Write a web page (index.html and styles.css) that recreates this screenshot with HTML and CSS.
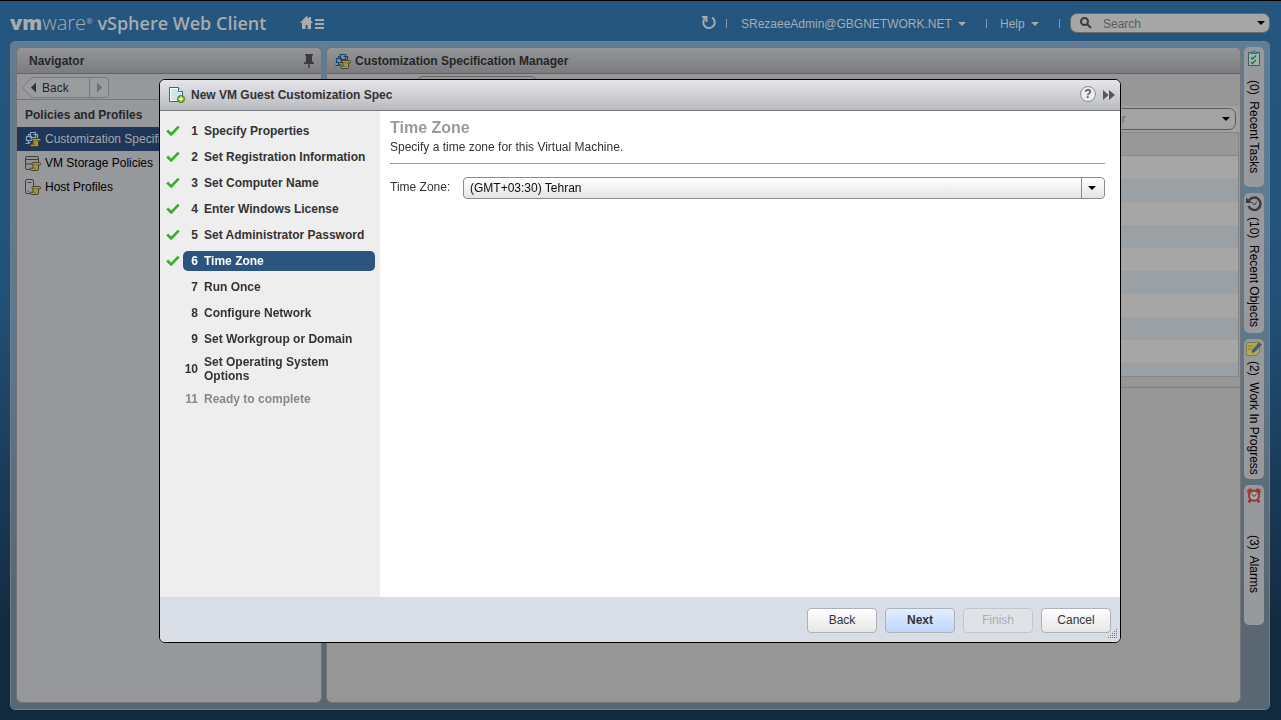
FILE: index.html
```
<!DOCTYPE html>
<html lang="en">
<head>
<meta charset="utf-8">
<title>vSphere Web Client</title>
<link rel="stylesheet" href="styles.css">
</head>
<body>

<svg class="sprites" width="0" height="0">
  <symbol id="check" viewBox="0 0 14 12"><path d="M1.200 5.500l4 4L12.700 1.700" fill="none" stroke="#35b024" stroke-width="2.600"/></symbol>
  <symbol id="scroll" viewBox="0 0 16 16">
    <path d="M8 7.500h6.500q1 0 1 1v1.300h-2v4.200q0 1.500-1.300 1.500H6.500q-1 0-1-1v-1.300H8V9.500q-1 0-1-1t1-1z" fill="#9f965c" stroke="#4d4522"/>
    <path d="M8 9.800h5.500M7 13.200h4" stroke="#6b6234" stroke-width=".8"/>
  </symbol>
  <symbol id="spec" viewBox="0 0 16 16">
    <path d="M5.500 1.500h5v5h-5zM8.500 3.500h4v4h-4M1.500 5.500h5v4h-5zM3.500 9.500v2h2M.5 12.500h4M3.500 5.500v-2h2" fill="none" stroke="currentColor" stroke-width="1.200"/>
    <use href="#scroll" width="16" height="16"/>
  </symbol>
  <symbol id="storage" viewBox="0 0 16 16">
    <path d="M2 1.500h10q1.500 0 1.500 1.500v10q0 1.500-1.500 1.500H2Q.5 14.500.5 13V3Q.5 1.500 2 1.500z" fill="#939393" stroke="#3f3f3f"/>
    <path d="M1 4.500h12M1 9h6" stroke="#3f3f3f"/>
    <use href="#scroll" width="16" height="16"/>
  </symbol>
  <symbol id="host" viewBox="0 0 16 16">
    <path d="M2 .5h5q1.500 0 1.500 1.500v12.500H2Q.5 14.500.5 13V2Q.5.500 2 .5z" fill="#9a9a9a" stroke="#3f3f3f"/>
    <path d="M2.500 3.500h4M2.500 12h1.500" stroke="#3f3f3f"/>
    <use href="#scroll" width="16" height="16"/>
  </symbol>
</svg>

<header class="topbar">
  <div class="brand"><b>vm</b><span class="brand-thin">ware</span><sup>®</sup> <span class="brand-name">vSphere Web Client</span></div>
  <button class="home" aria-label="Home">
    <svg width="24" height="16" viewBox="0 0 24 16" fill="#a9abad"><path d="M6.500 1L0 8h2v6h3.500v-4h2v4H11V8h2l-2-2.200V2H9v1.700zM15 4h9v2h-9zM15 8h9v2h-9zM15 12h9v2h-9z"/></svg>
  </button>
  <div class="tools">
    <button class="refresh" aria-label="Refresh">
      <svg width="16" height="16" viewBox="0 0 16 16" fill="none" stroke="#a9abad" stroke-width="2"><path d="M11 2.500a5.700 5.700 0 1 1-7 .8"/><path d="M1 2h4.500v5"/></svg>
    </button>
    <i class="sep"></i>
    <button class="menu user">SRezaeeAdmin@GBGNETWORK.NET <i class="caret"></i></button>
    <i class="sep"></i>
    <button class="menu help">Help <i class="caret"></i></button>
    <i class="sep"></i>
    <label class="search">
      <svg width="12" height="12" viewBox="0 0 12 12" fill="none" stroke="#3a3a3a" stroke-width="2"><circle cx="4.500" cy="4.500" r="3.500"/><path d="M7 7l4 4"/></svg>
      <input type="text" placeholder="Search" aria-label="Search">
      <i class="caret dark"></i>
    </label>
  </div>
</header>

<main class="shell">
  <nav class="panel navigator">
    <div class="panel-head"><h2>Navigator</h2>
      <svg width="10" height="14" viewBox="0 0 10 14" fill="#3b3b3b"><path d="M1 0h8v1.500H8V7l2 2v1H5.700v4H4.300v-4H0V9l2-2V1.500H1z"/></svg>
    </div>
    <div class="history">
      <svg class="history-shape" width="87" height="21" viewBox="0 0 87 21"><path d="M.5 10.500L9.500 1q1-.5 2-.5H83q3.500 0 3.500 3.500v13q0 3.500-3.500 3.500H11.500q-1 0-2-.5z" fill="#9b9ca0" stroke="#77787a"/><path d="M67.500 1v19" stroke="#77787a"/><path d="M14 5.500v10l-5-5z" fill="#333"/><path d="M75 5.500v10l5-5z" fill="#6f7073"/></svg>
      <button class="history-back">Back</button>
    </div>
    <h3>Policies and Profiles</h3>
    <ul class="nav-list">
      <li class="active"><a href="#"><svg width="16" height="16"><use href="#spec"/></svg>Customization Specification Manager</a></li>
      <li><a href="#"><svg width="16" height="16"><use href="#storage"/></svg>VM Storage Policies</a></li>
      <li><a href="#"><svg width="16" height="16"><use href="#host"/></svg>Host Profiles</a></li>
    </ul>
  </nav>

  <section class="panel manager">
    <div class="panel-head"><svg class="spec-icon" width="16" height="16"><use href="#spec"/></svg><h2>Customization Specification Manager</h2></div>
    <div class="manager-tabs"><div class="tab-group"></div></div>
    <div class="filter-row">
      <label class="filter"><input type="text" placeholder="Filter" aria-label="Filter"><i class="caret dark"></i></label>
    </div>
    <div class="grid-head"></div>
    <div class="grid-rows"></div>
    <div class="details"></div>
  </section>

  <aside class="dock">
    <button class="dock-tab tasks">
      <svg width="14" height="16" viewBox="0 0 14 16"><path d="M1.500 2.500h11v13h-11z" fill="#a4b3b2" stroke="#43595f"/><path d="M3.500 3.500v-1l2-.5q1.500-2.500 3 0l2 .5v1z" fill="#4e8ba8" stroke="#326f8e"/><path d="M4 7.500l1.500 1.500L9 5.500M4 12l1.500 1.500L9 10" fill="none" stroke="#16822a" stroke-width="1.500"/></svg>
      <span>(0)&nbsp; Recent Tasks</span>
    </button>
    <button class="dock-tab objects">
      <svg width="16" height="16" viewBox="0 0 16 16" fill="none" stroke="#3c3c3f"><path d="M3 4.500A6.200 6.200 0 1 1 2.500 10" stroke-width="2.400"/><path d="M0 1.500V7h6z" fill="#3c3c3f" stroke="none"/><path d="M6 6l2.500 3L11 5.500"/></svg>
      <span>(10)&nbsp; Recent Objects</span>
    </button>
    <button class="dock-tab progress">
      <svg width="16" height="14" viewBox="0 0 16 14"><path d="M.5.500h13v9l-3 4H.5z" fill="#b3a850" stroke="#7f7b4a"/><path d="M2 4h5M2 7h4" stroke="#857d38"/><path d="M6 10.500l1-3L13 1l2.200 1.800L9 9.500z" fill="#276b96" stroke="#254459" stroke-width=".6"/><path d="M12 2l1-1.500 2.500 2L14.500 4z" fill="#9d3434"/></svg>
      <span>(2)&nbsp; Work In Progress</span>
    </button>
    <button class="dock-tab alarms">
      <svg width="14" height="15" viewBox="0 0 14 15"><path d="M3 12l-1 2.500M11 12l1 2.500" stroke="#8d2c2c" stroke-width="2.500"/><path d="M0 4l1-3 3-.7L6 2h2l2-1.700L13 1l1 3-1.500 2h-11z" fill="#a43a3a"/><circle cx="7" cy="7.700" r="5" fill="#a9a9a9" stroke="#9c3434" stroke-width="2"/><path d="M4.500 6L7 8.500 9.500 6" fill="none" stroke="#333"/></svg>
      <span>(3)&nbsp; Alarms</span>
    </button>
  </aside>
</main>

<div class="overlay">
  <div class="dialog" role="dialog" aria-labelledby="dialog-title">
    <div class="dialog-head">
      <svg width="16" height="16" viewBox="0 0 16 16"><path d="M.5.500h9l4 4v10H.5z" fill="#fff" stroke="#1c6f9f"/><path d="M2 2h7v4h3v7H2z" fill="#cfe4f0"/><path d="M9.500.5v4h4" fill="#fff" stroke="#1c6f9f"/><circle cx="12" cy="12" r="3.700" fill="#6cab0e" stroke="#3f7d06" stroke-width=".6"/><path d="M12 9.700v4.600M9.700 12h4.600" stroke="#fff" stroke-width="1.400"/></svg>
      <h1 id="dialog-title">New VM Guest Customization Spec</h1>
      <button class="round" aria-label="Help">?</button>
      <button class="more" aria-label="Expand"><svg width="12" height="10" viewBox="0 0 12 10" fill="#55565a"><path d="M0 0l5.500 5L0 10zM6 0l6 5-6 5z"/></svg></button>
    </div>
    <div class="dialog-body">
      <ol class="steps">
        <li><svg width="14" height="12"><use href="#check"/></svg><a href="#"><b>1</b><span>Specify Properties</span></a></li>
        <li><svg width="14" height="12"><use href="#check"/></svg><a href="#"><b>2</b><span>Set Registration Information</span></a></li>
        <li><svg width="14" height="12"><use href="#check"/></svg><a href="#"><b>3</b><span>Set Computer Name</span></a></li>
        <li><svg width="14" height="12"><use href="#check"/></svg><a href="#"><b>4</b><span>Enter Windows License</span></a></li>
        <li><svg width="14" height="12"><use href="#check"/></svg><a href="#"><b>5</b><span>Set Administrator Password</span></a></li>
        <li class="current"><svg width="14" height="12"><use href="#check"/></svg><a href="#"><b>6</b><span>Time Zone</span></a></li>
        <li><a href="#"><b>7</b><span>Run Once</span></a></li>
        <li><a href="#"><b>8</b><span>Configure Network</span></a></li>
        <li><a href="#"><b>9</b><span>Set Workgroup or Domain</span></a></li>
        <li class="tall"><a href="#"><b>10</b><span>Set Operating System Options</span></a></li>
        <li class="pending"><a href="#"><b>11</b><span>Ready to complete</span></a></li>
      </ol>
      <form class="page">
        <h2>Time Zone</h2>
        <p>Specify a time zone for this Virtual Machine.</p>
        <hr>
        <div class="field">
          <label for="zone">Time Zone:</label>
          <div class="select">
            <select id="zone"><option>(GMT+03:30) Tehran</option></select>
            <i class="caret dark"></i>
          </div>
        </div>
      </form>
    </div>
    <div class="dialog-foot">
      <button class="btn">Back</button>
      <button class="btn primary">Next</button>
      <button class="btn" disabled>Finish</button>
      <button class="btn">Cancel</button>
      <svg class="grip" width="10" height="10" viewBox="0 0 10 10" stroke="#77797d" stroke-dasharray="1 1"><path d="M8 .5h2M6 2.500h4M4 4.500h6M2 6.500h8M0 8.500h10"/></svg>
    </div>
  </div>
</div>

</body>
</html>
```
FILE: styles.css
```
* { box-sizing: border-box; }

body {
  margin: 0;
  height: 100vh;
  display: flex;
  flex-direction: column;
  padding: 0 11px 10px 10px;
  border-top: 1px solid #000;
  background: linear-gradient(#24567f, #225279 40%, #142c42 85%, #122a40);
  font: 12px/14px "Liberation Sans", Arial, sans-serif;
  color: #333;
  overflow: hidden;
}

h1, h2, h3, p, ul, ol { margin: 0; padding: 0; }
h1, h2, h3 { font-size: 12px; line-height: 14px; }
ul, ol { list-style: none; }
a { color: inherit; text-decoration: none; }
button { font: inherit; color: inherit; background: none; border: 0; padding: 0; }
input { font: inherit; background: none; border: 0; padding: 0; outline: 0; min-width: 0; }
.sprites { position: absolute; }

.caret {
  display: inline-block;
  border: 4px solid transparent;
  border-top-color: currentColor;
  border-bottom: 0;
}
.caret.dark { color: #000; }

/* top bar */
.topbar {
  display: flex;
  align-items: center;
  height: 40px;
  flex: none;
  padding-top: 4px;
  color: #a9abad;
}
.brand { font: 18px/24px "Open Sans", sans-serif; white-space: nowrap; padding-bottom: 2px; }
.brand b { font-size: 20px; font-weight: 800; }
.brand-thin { font-size: 20px; font-weight: 300; }
.brand sup { font-size: 8px; vertical-align: 6px; }
.brand-name { font-weight: 600; }
.home { margin-left: 34px; height: 16px; }
.tools { margin-left: auto; display: flex; align-items: center; }
.sep { width: 1px; height: 9px; background: #8b9aa7; }
.refresh { height: 16px; margin-right: 9px; }
.menu { white-space: nowrap; padding-top: 1px; }
.menu .caret { margin: 0 0 2px 3px; }
.user { margin: 0 20px 0 14px; }
.help { margin: 0 20px 0 13px; }
.search {
  display: flex;
  align-items: center;
  width: 200px;
  height: 20px;
  margin-left: 10px;
  padding: 0 4px 0 9px;
  border: 1px solid #6b6b6b;
  border-radius: 7px;
  background: #a6a6a6;
}
.search input { flex: 1; margin-left: 11px; padding-top: 1px; }
.search input::placeholder { color: #5c5c5c; }

/* workspace */
.shell {
  flex: 1;
  min-height: 0;
  display: flex;
  padding: 5px 5px 6px;
  border: 1px solid #6f7e8a;
  border-radius: 5px;
  background: linear-gradient(#617d95, #5d7a90 40%, #5a6671 85%);
}
.panel {
  display: flex;
  flex-direction: column;
  border: 1px solid #757575;
  border-radius: 6px;
  overflow: hidden;
}
.panel-head {
  display: flex;
  align-items: center;
  flex: none;
  height: 26px;
  padding: 0 7px 0 12px;
  border-bottom: 1px solid #636363;
  background: linear-gradient(#949598, #7b7c7f);
  color: #262626;
}
.navigator { width: 306px; background: #97989c; }
.navigator .panel-head h2 { flex: 1; }
.history {
  position: relative;
  height: 26px;
  padding: 3px 5px;
  border-bottom: 1px solid #757678;
}
.history-shape { position: absolute; }
.history-back { position: relative; padding: 4px 20px; color: #222; }
.navigator h3 { padding: 8px 8px 5px; height: 27px; color: #262626; }
.nav-list a {
  display: flex;
  align-items: center;
  gap: 4px;
  height: 24px;
  padding-left: 8px;
  color: #000;
  white-space: nowrap;
}
.nav-list svg { flex: none; color: #86a7c4; }
.nav-list .active a { background: #1e3658; color: #a3a8ae; }

.manager { flex: 1; min-width: 0; margin: 0 3px 0 4px; background: #969696; }
.manager .panel-head { padding-left: 8px; gap: 4px; }
.spec-icon { color: #17466f; }
.manager-tabs { height: 32px; flex: none; padding: 2px 90px; }
.tab-group { width: 120px; height: 20px; border: 1px solid #666; border-radius: 6px; }
.filter-row { display: flex; justify-content: flex-end; align-items: center; flex: none; height: 26px; padding-right: 4px; background: #a0a0a0; }
.filter {
  display: flex;
  align-items: center;
  width: 160px;
  height: 22px;
  padding: 0 5px 0 22px;
  border: 1px solid #5c5c5c;
  border-radius: 7px;
  background: #a3a3a3;
}
.filter input { flex: 1; }
.filter input::placeholder { color: #64707a; }
.grid-head { flex: none; height: 24px; margin-right: 1px; border: 1px solid #868788; border-left: 0; background: #97989a; }
.grid-rows {
  flex: none;
  height: 221px;
  margin-right: 1px;
  border: solid #868788;
  border-width: 0 1px 1px 0;
  background: repeating-linear-gradient(#a6a6a6 0 23px, #9ba0a4 23px 46px);
}
.details { flex: 1; margin-top: 10px; border-top: 1px solid #71808b; }

.dock { display: flex; flex-direction: column; gap: 6px; width: 20px; }
.dock-tab {
  writing-mode: vertical-rl;
  display: flex;
  align-items: center;
  height: 140px;
  padding-top: 3px;
  border-radius: 5px;
  background: #98999c;
  color: #000;
  white-space: nowrap;
}
.dock-tab svg { flex: none; }
.dock-tab span { flex: 1; text-align: center; }

/* wizard */
.overlay {
  position: fixed;
  inset: 0;
  display: flex;
  padding: 79px 160px 77px 159px;
}
.dialog {
  flex: 1;
  min-width: 0;
  display: flex;
  flex-direction: column;
  border: 1px solid #000;
  border-radius: 6px;
  background: #fff;
  overflow: hidden;
}
.dialog-head {
  display: flex;
  align-items: center;
  flex: none;
  height: 31px;
  padding: 0 5px 0 9px;
  border-bottom: 1px solid #77787b;
  background: linear-gradient(#e6e6ea, #b9babf);
}
.dialog-head h1 { flex: 1; margin-left: 6px; }
.round {
  width: 16px;
  height: 16px;
  margin-bottom: 2px;
  border: 1px solid #8a8b8f;
  border-radius: 50%;
  background: #eee;
  color: #55565a;
  font-weight: bold;
  line-height: 14px;
}
.more { height: 12px; margin-left: 7px; }
.dialog-body { flex: 1; min-height: 0; display: flex; }
.steps {
  flex: none;
  width: 220px;
  padding: 7px 5px 0 6px;
  background: #eee;
  font-weight: bold;
}
.steps li { display: flex; align-items: center; justify-content: flex-end; height: 26px; }
.steps svg { flex: none; margin-right: 3px; }
.steps a { display: flex; align-items: center; flex: none; width: 192px; min-height: 20px; border-radius: 5px; }
.steps b { flex: none; width: 15px; margin-right: 6px; text-align: right; }
.steps .tall { height: 34px; }
.steps .tall span { width: 140px; }
.steps .current a { background: #2b547f; color: #fff; }
.steps .pending { color: #888; }

.page { flex: 1; min-width: 0; padding: 7px 15px 0 10px; }
.page h2 { font-size: 16px; line-height: 20px; color: #999; }
.page p { padding-top: 2px; }
.page hr { height: 1px; margin: 9px 0 13px; border: 0; background: #999; }
.field { display: flex; align-items: center; }
.field label { width: 73px; padding-bottom: 2px; }
.select { position: relative; flex: 1; }
.select select {
  display: block;
  width: 100%;
  height: 22px;
  padding: 0 6px;
  appearance: none;
  border: 1px solid #8a8b8e;
  border-radius: 4px;
  background: linear-gradient(#fff, #e4e4e4);
  font: inherit;
  color: #0b0b0b;
}
.select .caret {
  position: absolute;
  top: 9px;
  right: 9px;
}
.select::after {
  content: "";
  position: absolute;
  top: 1px;
  bottom: 1px;
  right: 23px;
  border-left: 1px solid #8a8b8e;
}

.dialog-foot {
  position: relative;
  display: flex;
  justify-content: flex-end;
  align-items: center;
  gap: 8px;
  flex: none;
  height: 45px;
  padding: 1px 9px 0;
  background: #d9dee6;
}
.btn {
  width: 70px;
  height: 25px;
  border: 1px solid #aeb1b6;
  border-radius: 4px;
  background: linear-gradient(#fff, #e6e6e6);
}
.btn.primary { background: linear-gradient(#e1f0ff, #bfd5fb); font-weight: bold; }
.btn:disabled { background: #dfe3e8; border-color: #c3c7cc; color: #aaadb2; }
.grip { position: absolute; right: 2px; bottom: 3px; }
```
